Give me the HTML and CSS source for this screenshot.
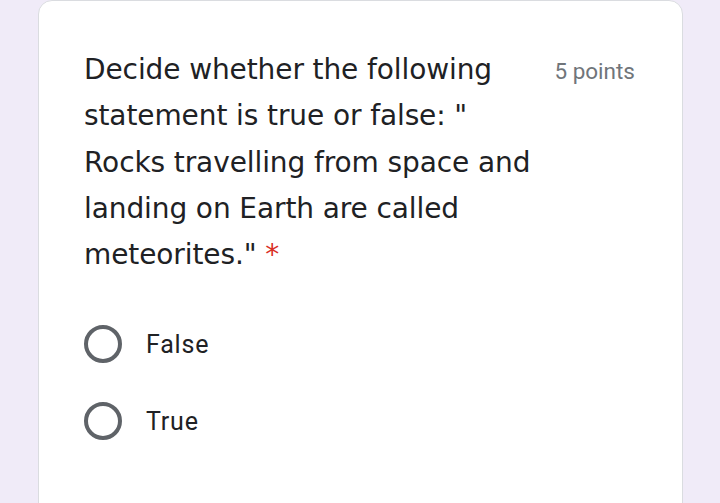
FILE: index.html
```html
<!DOCTYPE html>
<html>
<head>
<meta charset="utf-8">
<link rel="stylesheet" href="styles.css">
</head>
<body>
<div class="card">
  <div class="head">
    <div class="title">Decide whether the following<br>statement is true or false: "<br>Rocks travelling from space and<br>landing on Earth are called<br>meteorites." <span class="req">*</span></div>
    <div class="points">5 points</div>
  </div>
  <div class="options">
    <label class="opt"><span class="radio"></span><span class="lbl">False</span></label>
    <label class="opt"><span class="radio"></span><span class="lbl">True</span></label>
  </div>
</div>
</body>
</html>
```
FILE: styles.css
```css
html, body {
  margin: 0;
  padding: 0;
  background: #f0ebf8;
  height: 503px;
  overflow: hidden;
}
.card {
  margin-left: 38px;
  width: 645px;
  height: 520px;
  box-sizing: border-box;
  background: #fff;
  border: 1px solid #dadce0;
  border-radius: 14px;
  padding: 46px 47px 0 45px;
}
.head {
  display: flex;
  justify-content: space-between;
  align-items: flex-start;
}
.title {
  font-family: "DejaVu Sans", sans-serif;
  font-size: 28px;
  line-height: 46.3px;
  color: #202124;
  letter-spacing: -0.1px;
}
.req { color: #d93025; }
.points {
  font-family: Roboto, sans-serif;
  font-size: 22.5px;
  color: #70757a;
  line-height: 46px;
  padding-top: 1px;
}
.options {
  margin-top: 47px;
  display: flex;
  flex-direction: column;
  gap: 39px;
}
.opt {
  display: flex;
  align-items: center;
  gap: 24px;
}
.radio {
  width: 30px;
  height: 30px;
  border: 4px solid #5f6368;
  border-radius: 50%;
  flex: none;
}
.lbl {
  font-family: Roboto, sans-serif;
  font-size: 25px;
  letter-spacing: 0.8px;
  color: #202124;
}
```
